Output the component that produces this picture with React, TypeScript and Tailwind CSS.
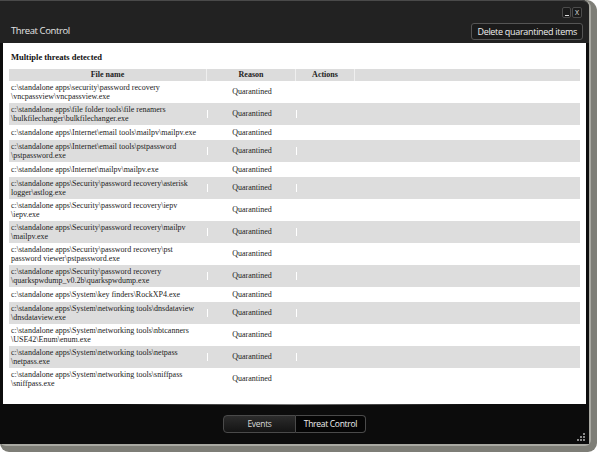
import React from 'react';

type Threat = {
  lines: string[];
};

const threats: Threat[] = [
  { lines: ['c:\\standalone apps\\security\\password recovery', '\\vncpassview\\vncpassview.exe'] },
  { lines: ['c:\\standalone apps\\file folder tools\\file renamers', '\\bulkfilechanger\\bulkfilechanger.exe'] },
  { lines: ['c:\\standalone apps\\Internet\\email tools\\mailpv\\mailpv.exe'] },
  { lines: ['c:\\standalone apps\\Internet\\email tools\\pstpassword', '\\pstpassword.exe'] },
  { lines: ['c:\\standalone apps\\Internet\\mailpv\\mailpv.exe'] },
  { lines: ['c:\\standalone apps\\Security\\password recovery\\asterisk', 'logger\\astlog.exe'] },
  { lines: ['c:\\standalone apps\\Security\\password recovery\\iepv', '\\iepv.exe'] },
  { lines: ['c:\\standalone apps\\Security\\password recovery\\mailpv', '\\mailpv.exe'] },
  { lines: ['c:\\standalone apps\\Security\\password recovery\\pst', 'password viewer\\pstpassword.exe'] },
  { lines: ['c:\\standalone apps\\Security\\password recovery', '\\quarkspwdump_v0.2b\\quarkspwdump.exe'] },
  { lines: ['c:\\standalone apps\\System\\key finders\\RockXP4.exe'] },
  { lines: ['c:\\standalone apps\\System\\networking tools\\dnsdataview', '\\dnsdataview.exe'] },
  { lines: ['c:\\standalone apps\\System\\networking tools\\nbtcanners', '\\USE42\\Enum\\enum.exe'] },
  { lines: ['c:\\standalone apps\\System\\networking tools\\netpass', '\\netpass.exe'] },
  { lines: ['c:\\standalone apps\\System\\networking tools\\sniffpass', '\\sniffpass.exe'] },
];

const uiFont = "font-['Open_Sans',_'Noto_Sans',_sans-serif]";
const serif = "font-['Liberation_Serif',_'Times_New_Roman',_serif]";

function ResizeGrip() {
  return (
    <svg width="8" height="8" viewBox="0 0 8 8" className="text-[#8a8a8a]">
      <rect x="6" y="0" width="2" height="2" fill="currentColor" />
      <rect x="3" y="3" width="2" height="2" fill="currentColor" />
      <rect x="6" y="3" width="2" height="2" fill="currentColor" />
      <rect x="0" y="6" width="2" height="2" fill="currentColor" />
      <rect x="3" y="6" width="2" height="2" fill="currentColor" />
      <rect x="6" y="6" width="2" height="2" fill="currentColor" />
    </svg>
  );
}

export default function App() {
  return (
    <div className="h-[455px] w-[599px] bg-white">
      <div className="flex h-[444px] w-[589px] flex-col rounded-tr-[7px] rounded-b-[5px] bg-[#0d0d0d] shadow-[1px_1px_0_1px_#a9a9a2,4px_4px_0_4px_#7e7e77]">
        {/* title bar */}
        <div className="h-[43px] rounded-tr-[7px] border-t border-[#4a4a4a] bg-[#222222]">
          <div className="flex justify-end gap-[1px] pr-[7px] pt-[6px]">
            <button type="button" className="flex h-[11px] w-[9px] items-end justify-center rounded-[2px] border border-[#4c4c4c] bg-[#1a1a1a] pb-[1px]">
              <span className="block h-px w-[4px] bg-[#dddddd]" />
            </button>
            <button type="button" className={`flex h-[11px] w-[10px] items-center justify-center rounded-[2px] border border-[#4c4c4c] bg-[#1a1a1a] text-[7px] leading-none text-[#e0e0e0] ${uiFont}`}>
              X
            </button>
          </div>
          <div className="mt-[5px] flex items-center justify-between pl-[11px] pr-[6px]">
            <span className={`text-[9.5px] tracking-[-0.4px] text-[#e4e4e4] ${uiFont}`}>Threat Control</span>
            <button type="button" className={`h-[17px] rounded-[3px] border border-[#555555] bg-[#1b1b1b] px-[5px] text-[9px] leading-none tracking-[-0.3px] text-[#eeeeee] ${uiFont}`}>
              Delete quarantined items
            </button>
          </div>
        </div>

        {/* content */}
        <div className="mx-[3px] flex-1 bg-white px-[6px]">
          <p className={`pl-[2px] pt-[9px] text-[8.5px] font-bold leading-[10px] text-[#111111] ${serif}`}>Multiple threats detected</p>
          <div className={`mt-[7px] text-[8px] text-[#222222] ${serif}`}>
            <div className="grid h-[12px] grid-cols-[198px_89px_59px_1fr] bg-[#dcdcdc] font-bold leading-[12px] text-[#222222]">
              <div className="border-r border-[#efefef] text-center">File name</div>
              <div className="border-r border-[#efefef] text-center">Reason</div>
              <div className="border-r border-[#efefef] text-center">Actions</div>
              <div />
            </div>
            {threats.map((t, i) => (
              <div
                key={i}
                className={`grid grid-cols-[198px_89px_59px_1fr] ${t.lines.length > 1 ? 'h-[22px]' : 'h-[15px]'} ${i % 2 === 1 ? 'bg-[#dddddd]' : 'bg-white'}`}
              >
                <div className="flex flex-col justify-center whitespace-nowrap pl-[2px] leading-[9.5px]">
                  {t.lines.map((l, j) => (
                    <span key={j}>{l}</span>
                  ))}
                </div>
                <div className="flex items-center">
                  <span className="h-[8px] w-px bg-white" />
                  <span className="flex-1 text-center">Quarantined</span>
                </div>
                <div className="flex items-center">
                  <span className="h-[8px] w-px bg-white" />
                </div>
                <div />
              </div>
            ))}
          </div>
        </div>

        {/* bottom bar */}
        <div className="relative flex h-[40px] items-center justify-center bg-[#0c0c0c]">
          <div className="absolute left-[120px] right-[120px] top-0 h-px bg-gradient-to-r from-transparent via-[#7a7a7a] to-transparent" />
          <div className={`flex h-[18px] text-[8.5px] tracking-[-0.3px] ${uiFont}`}>
            <button type="button" className="w-[73px] rounded-l-[4px] border border-[#4a4a4a] bg-gradient-to-b from-[#2c2c2c] to-[#141414] text-[#d8d8d8]">
              Events
            </button>
            <button type="button" className="w-[70px] rounded-r-[4px] border border-l-0 border-[#4a4a4a] bg-[#050505] text-[#f0f0f0]">
              Threat Control
            </button>
          </div>
          <div className="absolute bottom-[3px] right-[4px]">
            <ResizeGrip />
          </div>
        </div>
      </div>
    </div>
  );
}
